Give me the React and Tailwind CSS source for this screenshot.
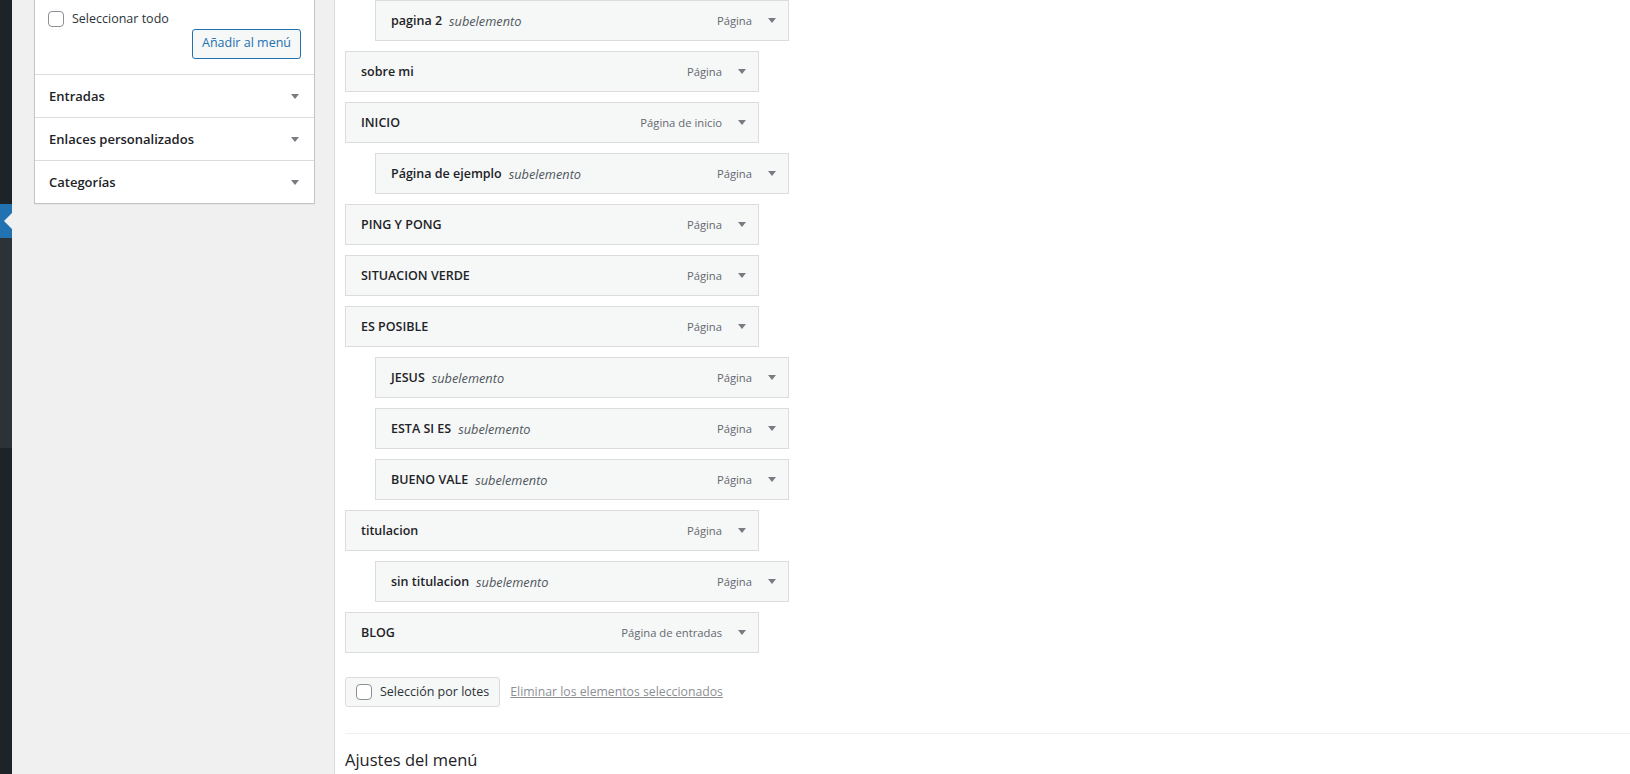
import React from 'react';

const items = [
  { title: 'pagina 2', sub: true, type: 'Página' },
  { title: 'sobre mi', type: 'Página' },
  { title: 'INICIO', type: 'Página de inicio' },
  { title: 'Página de ejemplo', sub: true, type: 'Página' },
  { title: 'PING Y PONG', type: 'Página' },
  { title: 'SITUACION VERDE', type: 'Página' },
  { title: 'ES POSIBLE', type: 'Página' },
  { title: 'JESUS', sub: true, type: 'Página' },
  { title: 'ESTA SI ES', sub: true, type: 'Página' },
  { title: 'BUENO VALE', sub: true, type: 'Página' },
  { title: 'titulacion', type: 'Página' },
  { title: 'sin titulacion', sub: true, type: 'Página' },
  { title: 'BLOG', type: 'Página de entradas' },
];

const Arrow = () => (
  <svg width="8" height="5" viewBox="0 0 8 5" className="shrink-0">
    <polygon points="0,0 8,0 4,5" fill="#787c82" />
  </svg>
);

const Checkbox = () => (
  <span className="block w-4 h-4 shrink-0 rounded-[4px] border border-[#8c8f94] bg-white" />
);

const MenuItem = ({ item }) => (
  <div
    className={
      item.sub
        ? 'ml-[30px] w-[414px] h-[41px] flex items-center pt-[2px] pl-[15px] pr-[12px] border border-[#dcdcde] bg-[#f6f7f7]'
        : 'w-[414px] h-[41px] flex items-center pt-[2px] pl-[15px] pr-[12px] border border-[#dcdcde] bg-[#f6f7f7]'
    }
  >
    <span className="text-[12.5px] font-semibold text-[#1d2327]">{item.title}</span>
    {item.sub && <span className="ml-[7px] text-[12.75px] italic text-[#50575e]">subelemento</span>}
    <span className="ml-auto text-[11.25px] text-[#646970]">{item.type}</span>
    <span className="ml-[16px] -mt-[2px]">
      <Arrow />
    </span>
  </div>
);

const Section = ({ label }) => (
  <div className="h-[43px] flex items-center justify-between pt-[1px] pl-[14px] pr-[15px] border-t border-[#dcdcde]">
    <span className="text-[13px] font-semibold text-[#1d2327]">{label}</span>
    <Arrow />
  </div>
);

export default function App() {
  return (
    <div className="flex h-[774px] overflow-hidden bg-white font-['Open_Sans',sans-serif]">
      <div className="w-[12px] flex flex-col shrink-0">
        <div className="h-[204px] bg-[#1d2327]" />
        <div className="h-[34px] bg-[#2271b1] flex items-center justify-end">
          <span className="block w-0 h-0 border-y-[8px] border-y-transparent border-r-[8px] border-r-[#f0f0f1]" />
        </div>
        <div className="h-[210px] bg-[#2c3338]" />
        <div className="flex-1 bg-[#1d2327]" />
      </div>

      <div className="w-[323px] shrink-0 bg-[#f0f0f1] border-r border-[#dcdcde] pl-[22px]">
        <div className="w-[281px] bg-white border-x border-b border-[#c3c4c7] shadow-[0_1px_1px_rgba(0,0,0,0.04)]">
          <div className="h-[74px] pl-[13px] pr-[13px] pt-[10px]">
            <div className="flex items-center gap-[8px]">
              <Checkbox />
              <span className="text-[12.5px] text-[#2c3338]">Seleccionar todo</span>
            </div>
            <div className="flex justify-end">
              <button className="h-[30px] px-[9px] rounded-[3px] border border-[#2271b1] bg-[#f6f7f7] text-[12.5px] text-[#2271b1]">
                Añadir al menú
              </button>
            </div>
          </div>
          <Section label="Entradas" />
          <Section label="Enlaces personalizados" />
          <Section label="Categorías" />
        </div>
      </div>

      <div className="flex-1 pl-[10px]">
        <div className="flex flex-col gap-[10px]">
          {items.map((item, i) => (
            <MenuItem key={i} item={item} />
          ))}
        </div>

        <div className="mt-[24px] flex items-center">
          <div className="h-[30px] flex items-center gap-[8px] pl-[10px] pr-[10px] rounded-[3px] border border-[#dcdcde] bg-[#f6f7f7]">
            <Checkbox />
            <span className="text-[12.5px] text-[#2c3338]">Selección por lotes</span>
          </div>
          <a className="ml-[10px] text-[12.25px] text-[#8c8f94] underline">Eliminar los elementos seleccionados</a>
        </div>

        <div className="mt-[26px] border-t border-[#f0f0f1]" />

        <h3 className="mt-[14px] text-[16.5px] text-[#1d2327]">Ajustes del menú</h3>
      </div>
    </div>
  );
}
